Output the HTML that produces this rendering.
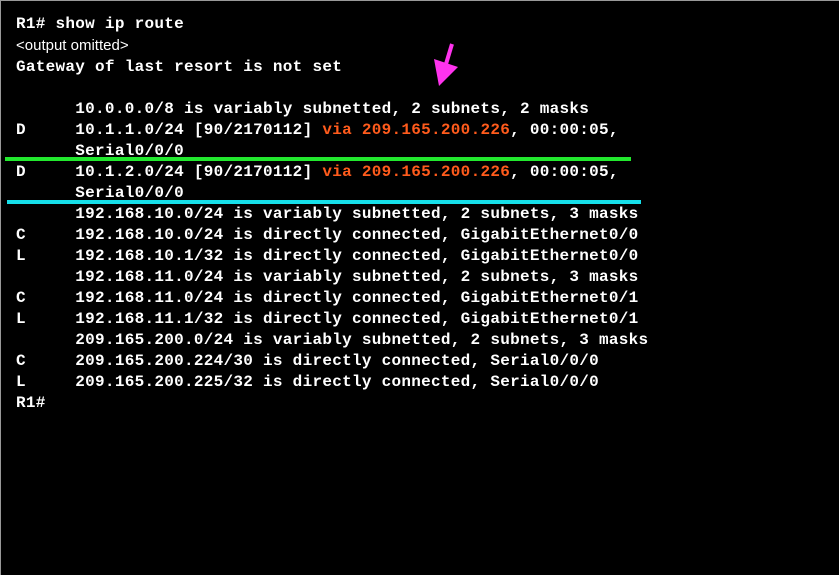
<!DOCTYPE html>
<html><head><meta charset="utf-8"><style>
html,body{margin:0;padding:0;background:#000;}
#s{position:relative;width:838px;height:574px;background:#000;border-left:1px solid #999;border-top:1px solid #999;overflow:hidden;}
pre{position:absolute;left:15px;top:13px;margin:0;font-family:"Liberation Mono",monospace;font-weight:bold;font-size:16px;letter-spacing:0.28px;line-height:21px;color:#fff;}
.o{color:#ff5b1c;}
.sans{font-family:"Liberation Sans",sans-serif;font-weight:normal;font-size:15px;letter-spacing:0;}
.bar{position:absolute;height:4px;}
</style></head><body><div id="s">
<pre>R1# show ip route
<span class="sans">&lt;output omitted&gt;</span>
Gateway of last resort is not set

      10.0.0.0/8 is variably subnetted, 2 subnets, 2 masks
D     10.1.1.0/24 [90/2170112] <span class="o">via 209.165.200.226</span>, 00:00:05,
      Serial0/0/0
D     10.1.2.0/24 [90/2170112] <span class="o">via 209.165.200.226</span>, 00:00:05,
      Serial0/0/0
      192.168.10.0/24 is variably subnetted, 2 subnets, 3 masks
C     192.168.10.0/24 is directly connected, GigabitEthernet0/0
L     192.168.10.1/32 is directly connected, GigabitEthernet0/0
      192.168.11.0/24 is variably subnetted, 2 subnets, 3 masks
C     192.168.11.0/24 is directly connected, GigabitEthernet0/1
L     192.168.11.1/32 is directly connected, GigabitEthernet0/1
      209.165.200.0/24 is variably subnetted, 2 subnets, 3 masks
C     209.165.200.224/30 is directly connected, Serial0/0/0
L     209.165.200.225/32 is directly connected, Serial0/0/0
R1#</pre>
<div class="bar" style="left:4px;top:156px;width:626px;background:#22e82e;"></div>
<div class="bar" style="left:6px;top:199px;width:634px;background:#16e0ea;"></div>
<svg style="position:absolute;left:0;top:0" width="839" height="575">
<line x1="451" y1="43" x2="445" y2="63" stroke="#ff33ee" stroke-width="4"/>
<polygon points="433,58 457,66 438,85" fill="#ff33ee"/>
</svg>
</div></body></html>
